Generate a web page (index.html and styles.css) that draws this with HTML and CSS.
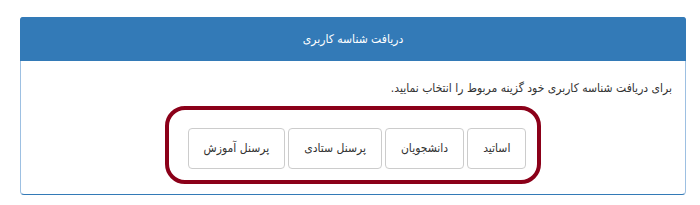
FILE: index.html
```html
<!DOCTYPE html>
<html lang="fa" dir="rtl">
<head>
  <meta charset="UTF-8">
  <title>دریافت شناسه کاربری</title>
  <link rel="stylesheet" href="styles.css">
</head>
<body>
  <div class="panel">
    <div class="panel-heading">دریافت شناسه کاربری</div>
    <div class="panel-body">
      <p class="hint">برای دریافت شناسه کاربری خود گزینه مربوط را انتخاب نمایید.</p>
      <div class="choices">
        <button class="btn">اساتید</button>
        <button class="btn">دانشجویان</button>
        <button class="btn">پرسنل ستادی</button>
        <button class="btn">پرسنل آموزش</button>
      </div>
    </div>
  </div>
</body>
</html>
```

FILE: styles.css
```css
* {
  box-sizing: border-box;
}

body {
  margin: 0;
  padding: 17px 14px 0 20px;
  background: #fff;
  font-family: "DejaVu Sans Condensed", "DejaVu Sans", Tahoma, sans-serif;
  font-stretch: condensed;
  font-size: 12px;
  color: #333;
}

.panel {
  width: 666px;
  border: 1px solid #337ab7;
  border-left-color: #9dc0e2;
  border-right-color: #9dc0e2;
  border-radius: 4px;
  background: #fff;
}

.panel-heading {
  height: 44px;
  line-height: 44px;
  background-color: #337ab7;
  color: #fff;
  text-align: center;
  font-size: 12px;
  border-radius: 3px 3px 0 0;
  margin: -1px -1px 0 -1px;
}

.panel-body {
  padding: 17px 13px 10px 13px;
  text-align: center;
}

.hint {
  margin: 0 0 8px 0;
  line-height: 20px;
  text-align: right;
}

.choices {
  display: inline-flex;
  gap: 3px;
  padding: 18px 11px 11px 19px;
  border: 4px solid #8b0019;
  border-radius: 20px;
}

.btn {
  font-family: inherit;
  font-stretch: inherit;
  font-size: 12px;
  line-height: 19px;
  padding: 10px 15px;
  color: #333;
  background: #fff;
  border: 1px solid #ccc;
  border-radius: 4px;
  cursor: pointer;
}

.btn:hover {
  background-color: #e6e6e6;
}
```
